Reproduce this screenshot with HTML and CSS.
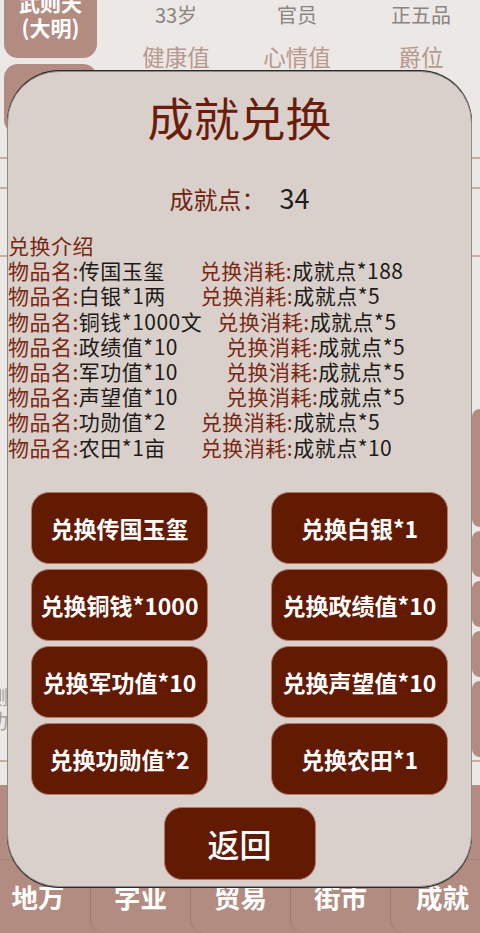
FILE: index.html
```html
<!DOCTYPE html>
<html lang="zh">
<head>
<meta charset="utf-8">
<title>成就兑换</title>
<link rel="stylesheet" href="styles.css">
</head>
<body>
<div class="page">
  <div class="top">
    <div class="cards">
      <div class="card card-main">武则天<br>(大明)</div>
      <div class="card card-second">手</div>
    </div>
    <div class="stats">
      <span class="stat-v">33岁</span><span class="stat-v">官员</span><span class="stat-v">正五品</span>
      <span class="stat-k">健康值</span><span class="stat-k">心情值</span><span class="stat-k">爵位</span>
    </div>
  </div>
  <div class="rule r1"></div>
  <div class="rule r2"></div>
  <div class="rule r3"></div>
  <div class="middle">
    <div class="side-blocks">
      <div class="blk b1"></div>
      <div class="blk b2"></div>
      <div class="blk b3"></div>
      <div class="blk b4"></div>
      <div class="blk b5"></div>
    </div>
    <div class="side-text">测<br>功</div>
  </div>
  <div class="rule r4"></div>
  <div class="footer">
    <div class="tabs">
      <span class="tab">地万</span><span class="tab">字业</span><span class="tab">贸易</span><span class="tab">街市</span><span class="tab">成就</span>
    </div>
  </div>
</div>

<div class="modal">
  <h1 class="title">成就兑换</h1>
  <p class="points"><span class="lbl">成就点：</span><span class="val">34</span></p>
  <div class="intro">
    <div class="row head">兑换介绍</div>
    <div class="row"><span class="lbl">物品名:</span>传国玉玺<span class="cost gap-m"><span class="lbl">兑换消耗:</span>成就点*188</span></div>
    <div class="row"><span class="lbl">物品名:</span>白银*1两<span class="cost gap-m"><span class="lbl">兑换消耗:</span>成就点*5</span></div>
    <div class="row"><span class="lbl">物品名:</span>铜钱*1000文<span class="cost gap-s"><span class="lbl">兑换消耗:</span>成就点*5</span></div>
    <div class="row"><span class="lbl">物品名:</span>政绩值*10<span class="cost gap-l"><span class="lbl">兑换消耗:</span>成就点*5</span></div>
    <div class="row"><span class="lbl">物品名:</span>军功值*10<span class="cost gap-l"><span class="lbl">兑换消耗:</span>成就点*5</span></div>
    <div class="row"><span class="lbl">物品名:</span>声望值*10<span class="cost gap-l"><span class="lbl">兑换消耗:</span>成就点*5</span></div>
    <div class="row"><span class="lbl">物品名:</span>功勋值*2<span class="cost gap-m"><span class="lbl">兑换消耗:</span>成就点*5</span></div>
    <div class="row"><span class="lbl">物品名:</span>农田*1亩<span class="cost gap-m"><span class="lbl">兑换消耗:</span>成就点*10</span></div>
  </div>
  <div class="btns">
    <button class="btn">兑换传国玉玺</button>
    <button class="btn">兑换白银*1</button>
    <button class="btn">兑换铜钱*1000</button>
    <button class="btn">兑换政绩值*10</button>
    <button class="btn">兑换军功值*10</button>
    <button class="btn">兑换声望值*10</button>
    <button class="btn">兑换功勋值*2</button>
    <button class="btn">兑换农田*1</button>
  </div>
  <div class="back-wrap"><button class="back">返回</button></div>
</div>
</body>
</html>
```

FILE: styles.css
```css
html, body {
  margin: 0;
  padding: 0;
}
body {
  width: 480px;
  height: 933px;
  overflow: hidden;
  background: #ece8e5;
  font-family: "Noto Sans CJK SC", "Noto Sans", sans-serif;
  position: relative;
}
.page {
  height: 933px;
  display: flex;
  flex-direction: column;
}
.top {
  display: flex;
  height: 150px;
}
.cards {
  width: 114px;
  margin-left: 4px;
  display: flex;
  flex-direction: column;
  gap: 6px;
}
.card {
  background: #b38c81;
  border-radius: 14px;
  color: #fff;
  font-weight: 700;
  text-align: center;
  font-size: 21px;
  line-height: 25px;
}
.card-main {
  margin-top: -24px;
  height: 82px;
  padding-top: 14px;
  box-sizing: border-box;
}
.card-second {
  height: 70px;
  padding-top: 10px;
  box-sizing: border-box;
}
.stats {
  flex: 1;
  display: grid;
  grid-template-columns: 132px 110px 128px;
  grid-auto-rows: 40px;
  padding-left: 13px;
  margin-top: -5px;
  font-size: 20px;
  text-align: center;
}
.stat-v {
  color: #8b8582;
  line-height: 40px;
}
.stat-k {
  color: #b8978d;
  line-height: 42px;
  font-size: 22.5px;
}
.stats span:nth-child(3n) {
  padding-left: 10px;
}
.rule {
  height: 2px;
  background: #c9aca3;
}
.r1 { margin-top: 7px; }
.r2 { margin-top: 28px; }
.r3 { margin-top: 66px; }
.middle {
  flex: 1;
  position: relative;
  display: flex;
  justify-content: space-between;
}
.side-blocks {
  order: 2;
  width: 8px;
  display: flex;
  flex-direction: column;
  gap: 4px;
  padding-top: 152px;
}
.blk {
  background: #b38c81;
  border-radius: 8px 0 0 8px;
}
.b1 { height: 118px; }
.b2 { height: 46px; }
.b3 { height: 46px; }
.b4 { height: 46px; }
.b5 { height: 76px; }
.side-text {
  order: 1;
  color: #a6a09d;
  font-size: 20px;
  line-height: 24px;
  padding-top: 428px;
  margin-left: -12px;
}
.r4 { margin-top: 0; }
.footer {
  height: 148px;
  margin-top: 23px;
  background: #b38c81;
  display: flex;
  flex-direction: column;
  justify-content: flex-end;
}
.tabs {
  height: 73px;
  border-top: 1px solid #a98278;
  display: grid;
  grid-template-columns: 90px 100px 100px 100px 90px;
}
.tab {
  color: #fff;
  font-size: 26.5px;
  font-weight: 700;
  text-align: center;
  line-height: 30px;
  padding-top: 22px;
  border-left: 1px solid #9d7a72;
  border-radius: 0 0 0 14px;
}
.tab:first-child {
  border-left: none;
  padding-right: 14px;
}
.tab:last-child {
  padding-left: 14px;
}

/* Modal */
.modal {
  position: absolute;
  left: 7px;
  top: 71px;
  width: 465px;
  height: 816px;
  box-sizing: border-box;
  background: #d9d0cb;
  border: 1px solid #8f8985;
  border-radius: 52px;
  box-shadow: 0 -1px 0 #2a2a2a, 0 1px 0 #2a2a2a;
}
.title {
  margin: 0;
  padding-top: 16px;
  text-align: center;
  font-size: 46px;
  line-height: 56px;
  font-weight: 400;
  color: #6b1c0b;
}
.points {
  margin: 39px 0 0;
  text-align: center;
  font-size: 24px;
  line-height: 30px;
}
.points .lbl {
  color: #6f2612;
}
.points .val {
  color: #1e1e1e;
  font-size: 27px;
  margin-left: 14px;
}
.intro {
  margin-top: 19px;
  padding-left: 0;
  font-size: 21px;
  letter-spacing: 0.5px;
  line-height: 25.2px;
  color: #1e1a18;
  white-space: nowrap;
}
.row .lbl, .head {
  color: #7a2712;
}
.cost {
  display: inline-block;
}
.gap-s { margin-left: 15px; }
.gap-m { margin-left: 35px; }
.gap-l { margin-left: 48px; }
.btns {
  margin-top: 32px;
  padding: 0 23px 0 23px;
  display: grid;
  grid-template-columns: 177px 177px;
  justify-content: space-between;
  row-gap: 5px;
}
.btn, .back {
  background: #621a03;
  color: #fff;
  border: 1px solid #b27a68;
  border-radius: 18px;
  font-family: "Noto Sans CJK SC", "Noto Sans", sans-serif;
  font-weight: 700;
  padding: 0;
  cursor: pointer;
}
.btn {
  height: 72px;
  font-size: 23px;
}
.back-wrap {
  margin-top: 12px;
  display: flex;
  justify-content: center;
}
.back {
  width: 152px;
  height: 73px;
  font-size: 32px;
  font-weight: 500;
}
```
